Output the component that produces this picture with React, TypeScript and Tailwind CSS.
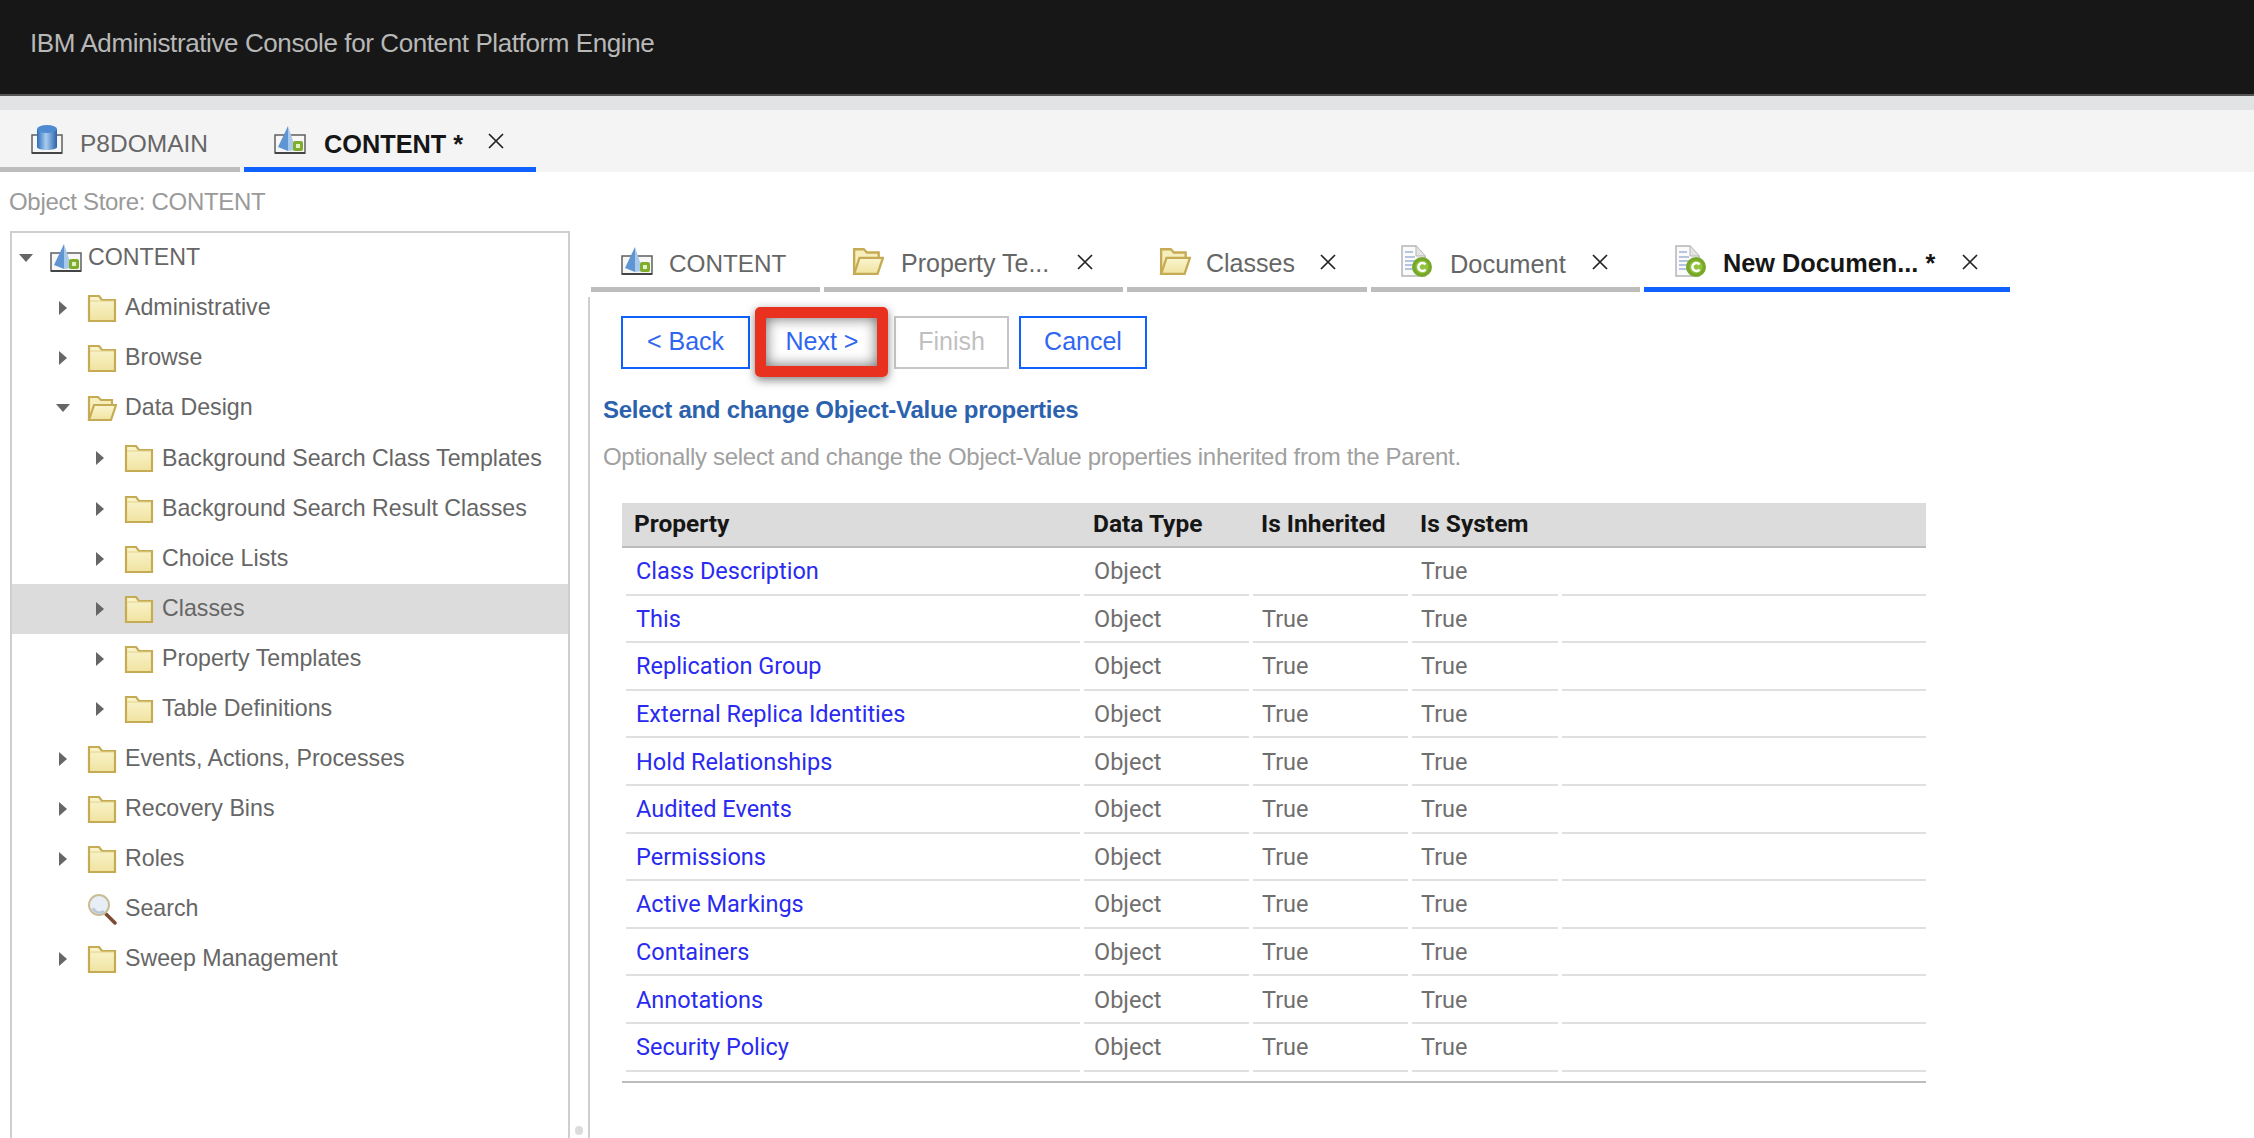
import React from 'react';

const SANS = "font-['Liberation_Sans',Arial,sans-serif]";

const FolderIcon = ({ open = false, size = 30 }: { open?: boolean; size?: number }) => (
  <svg width={size} height={size} viewBox="0 0 30 30" className="shrink-0">
    <defs>
      <linearGradient id="folderFill" x1="0" y1="0" x2="0" y2="1">
        <stop offset="0" stopColor="#faf5d0" />
        <stop offset="1" stopColor="#f0e3a0" />
      </linearGradient>
    </defs>
    {open ? (
      <>
        <path d="M2 27 V4 H11 L14 7 H25 V12" fill="#f6eebd" stroke="#c6ab55" strokeWidth="2.2" />
        <path d="M2 27 L7 12 H29 L24 27 Z" fill="url(#folderFill)" stroke="#c6ab55" strokeWidth="2.2" />
      </>
    ) : (
      <>
        <path d="M2 28 V3 H12 L15 7 H28 V28 Z" fill="url(#folderFill)" stroke="#c6ab55" strokeWidth="2.2" />
        <path d="M3 8 H27" stroke="#e2d28c" strokeWidth="1" />
      </>
    )}
  </svg>
);

const StoreIcon = () => (
  <svg width="32" height="30" viewBox="0 0 32 30" className="shrink-0">
    <rect x="1" y="10" width="30" height="18" fill="#f7f7f7" stroke="#5f5f5f" strokeWidth="1.5" />
    <path d="M1 28 H31" stroke="#444" strokeWidth="2" />
    <path d="M14 1 L4 22 L14 26 Z" fill="#5f95d3" />
    <path d="M14 1 L22 25 L14 26 Z" fill="#a9c9ea" />
    <rect x="19" y="16" width="10" height="10" rx="2" fill="#7fae2e" />
    <rect x="22" y="19" width="4" height="4" fill="#e4f1c6" />
  </svg>
);

const DomainIcon = () => (
  <svg width="32" height="32" viewBox="0 0 32 32" className="shrink-0">
    <defs>
      <linearGradient id="cyl" x1="0" y1="0" x2="1" y2="0">
        <stop offset="0" stopColor="#2f6db8" />
        <stop offset="0.45" stopColor="#a8cdf0" />
        <stop offset="1" stopColor="#2a62ab" />
      </linearGradient>
    </defs>
    <rect x="1" y="11" width="30" height="18" fill="#f7f7f7" stroke="#5f5f5f" strokeWidth="1.5" />
    <path d="M1 29 H31" stroke="#444" strokeWidth="2" />
    <path d="M6 5 V23 C6 27 26 27 26 23 V5 Z" fill="url(#cyl)" />
    <ellipse cx="16" cy="5" rx="10" ry="4" fill="#4f8bd0" />
  </svg>
);

const DocIcon = () => (
  <svg width="32" height="33" viewBox="0 0 32 33" className="shrink-0">
    <path d="M1 1 H15 L24 11 V31 H1 Z" fill="#fafafa" stroke="#b5b5b5" strokeWidth="1.5" />
    <path d="M15 1 V11 H24" fill="#e4e4e4" stroke="#b5b5b5" strokeWidth="1" />
    <path d="M4 7 H12 M4 12 H14 M4 16 H16 M4 20 H14 M4 24 H14" stroke="#9fb4d8" strokeWidth="1.5" />
    <circle cx="21" cy="22" r="10" fill="#78a82a" />
    <circle cx="21" cy="22" r="6.5" fill="#93c43f" />
    <path d="M24.5 19.5 A4 4 0 1 0 24.5 24.5" fill="none" stroke="#fff" strokeWidth="2.5" />
  </svg>
);

const SearchIcon = () => (
  <svg width="30" height="32" viewBox="0 0 30 32" className="shrink-0">
    <path d="M19 21 L28 30" stroke="#7a4a35" strokeWidth="3.5" strokeLinecap="round" />
    <circle cx="12" cy="12" r="10" fill="#e8eef6" stroke="#c9bd95" strokeWidth="2" />
    <path d="M6 15 A7 7 0 0 0 17 18" fill="none" stroke="#b9c7da" strokeWidth="2.5" />
  </svg>
);

const CloseIcon = () => (
  <svg width="16" height="16" viewBox="0 0 16 16" className="shrink-0">
    <path d="M1 1 L15 15 M15 1 L1 15" stroke="#222" strokeWidth="1.7" />
  </svg>
);

const Caret = ({ dir }: { dir: 'right' | 'down' | 'none' }) => (
  <span className="w-6 h-6 shrink-0 flex items-center justify-center">
    {dir === 'right' && (
      <svg width="8" height="14" viewBox="0 0 8 14">
        <path d="M0 0 L8 7 L0 14 Z" fill="#666" />
      </svg>
    )}
    {dir === 'down' && (
      <svg width="14" height="8" viewBox="0 0 14 8">
        <path d="M0 0 H14 L7 8 Z" fill="#666" />
      </svg>
    )}
  </span>
);

const indent = ['pl-[2px]', 'pl-[39px]', 'pl-[76px]'];

const treeRows = [
  { label: 'CONTENT', level: 0, caret: 'down', icon: 'store' },
  { label: 'Administrative', level: 1, caret: 'right', icon: 'folder' },
  { label: 'Browse', level: 1, caret: 'right', icon: 'folder' },
  { label: 'Data Design', level: 1, caret: 'down', icon: 'open' },
  { label: 'Background Search Class Templates', level: 2, caret: 'right', icon: 'folder' },
  { label: 'Background Search Result Classes', level: 2, caret: 'right', icon: 'folder' },
  { label: 'Choice Lists', level: 2, caret: 'right', icon: 'folder' },
  { label: 'Classes', level: 2, caret: 'right', icon: 'folder', selected: true },
  { label: 'Property Templates', level: 2, caret: 'right', icon: 'folder' },
  { label: 'Table Definitions', level: 2, caret: 'right', icon: 'folder' },
  { label: 'Events, Actions, Processes', level: 1, caret: 'right', icon: 'folder' },
  { label: 'Recovery Bins', level: 1, caret: 'right', icon: 'folder' },
  { label: 'Roles', level: 1, caret: 'right', icon: 'folder' },
  { label: 'Search', level: 1, caret: 'none', icon: 'search' },
  { label: 'Sweep Management', level: 1, caret: 'right', icon: 'folder' },
] as const;

const props = [
  ['Class Description', ''],
  ['This', 'True'],
  ['Replication Group', 'True'],
  ['External Replica Identities', 'True'],
  ['Hold Relationships', 'True'],
  ['Audited Events', 'True'],
  ['Permissions', 'True'],
  ['Active Markings', 'True'],
  ['Containers', 'True'],
  ['Annotations', 'True'],
  ['Security Policy', 'True'],
];

const TreeIcon = ({ kind }: { kind: string }) => {
  if (kind === 'store') return <StoreIcon />;
  if (kind === 'open') return <FolderIcon open />;
  if (kind === 'search') return <SearchIcon />;
  return <FolderIcon />;
};

interface TabProps {
  icon: React.ReactNode;
  label: string;
  active?: boolean;
  closable?: boolean;
  className: string;
  labelClass: string;
}

// underline sits at the bottom of every tab, blue when active
const Tab = ({ icon, label, active, closable, className, labelClass }: TabProps) => (
  <div className={`flex items-center border-b-[5px] ${active ? 'border-[#0f62fe]' : 'border-[#bdbdbd]'} ${className}`}>
    {icon}
    <span className={`whitespace-nowrap ${active ? 'font-bold text-[#161616]' : 'text-[#666]'} ${labelClass}`}>
      {label}
    </span>
    {closable && (
      <span className="mt-[2px]">
        <CloseIcon />
      </span>
    )}
  </div>
);

const rowGrid = 'grid grid-cols-[454px_165px_155px_146px_1fr] gap-x-[4px] pl-[4px]';

export default function App() {
  return (
    <div className={`h-screen w-full overflow-hidden flex flex-col bg-white ${SANS}`}>
      <header className="h-[96px] shrink-0 bg-[#171717] border-b-2 border-[#555] flex items-center pl-[30px] pb-[7px]">
        <span className="text-[26px] text-[#b8b8b8] tracking-[-0.4px]">IBM Administrative Console for Content Platform Engine</span>
      </header>
      <div className="h-[14px] shrink-0 bg-[#e2e3e5]" />

      <div className="h-[62px] shrink-0 bg-[#f4f4f4] flex items-stretch gap-[4px]">
        <Tab className="w-[240px] pl-[31px] gap-[17px] pt-[2px]" icon={<DomainIcon />} label="P8DOMAIN" labelClass="text-[24.5px] mt-[10px]" />
        <Tab className="w-[292px] pl-[30px] gap-[18px] pt-[2px]" icon={<StoreIcon />} label="CONTENT *" active closable labelClass="text-[25.3px] mt-[10px] mr-[7px]" />
      </div>

      <div className="h-[59px] shrink-0 flex items-center pl-[9px]">
        <span className="text-[24px] text-[#9a9a9a] tracking-[-0.3px]">Object Store: CONTENT</span>
      </div>

      <div className="flex-1 flex min-h-0">
        <aside className="w-[560px] ml-[10px] shrink-0 border-2 border-b-0 border-[#cfcfcf]">
          {treeRows.map((row) => (
            <div
              key={row.label}
              className={`h-[50.1px] flex items-center ${indent[row.level]} ${'selected' in row ? 'bg-[#dcdcdc]' : ''}`}
            >
              <Caret dir={row.caret} />
              <span className="ml-[12px]">
                <TreeIcon kind={row.icon} />
              </span>
              <span className={`${row.level === 0 ? 'ml-[6px]' : 'ml-[8px]'} -mt-[1px] text-[23.2px] text-[#666] whitespace-nowrap`}>{row.label}</span>
            </div>
          ))}
        </aside>

        <div className="relative flex-1 min-w-0 pl-[18px]">
          <div className="absolute left-[5px] bottom-[3px] w-[8px] h-[9px] rounded-full bg-[#dcdcdc]" />

          <div className="h-[61px] ml-[3px] flex items-stretch gap-[4px]">
            <Tab className="w-[229px] pl-[30px] gap-[16px] pt-[4px]" icon={<StoreIcon />} label="CONTENT" labelClass="text-[24.3px] mt-[6px]" />
            <Tab className="w-[299px] pl-[28px] gap-[17px] pt-[4px]" icon={<FolderIcon open size={32} />} label="Property Te..." closable labelClass="text-[25px] mt-[6px] mr-[11px]" />
            <Tab className="w-[240px] pl-[32px] gap-[15px] pt-[4px]" icon={<FolderIcon open size={32} />} label="Classes" closable labelClass="text-[25px] mt-[6px] mr-[10px]" />
            <Tab className="w-[269px] pl-[30px] gap-[17px] pt-[4px]" icon={<DocIcon />} label="Document" closable labelClass="text-[25.4px] mt-[6px] mr-[9px]" />
            <Tab className="w-[366px] pl-[31px] gap-[16px] pt-[4px]" icon={<DocIcon />} label="New Documen... *" active closable labelClass="text-[25.3px] mt-[6px] mr-[11px]" />
          </div>

          <div className="mt-[5px] h-full border-l-2 border-[#cfcfcf] pl-[13px] pt-[19px]">
            <div className="flex ml-[18px] h-[53px] text-[25px]">
              <button className="w-[129px] pb-[1px] border-2 border-[#0f62fe] text-[#2f66f0]">&lt; Back</button>
              <div className="relative ml-[10px] mr-[10px]">
                <button className="w-[124px] h-full pb-[1px] text-[#2f66f0]">Next &gt;</button>
                <div className="absolute -left-[5px] -right-[4px] -top-[9px] -bottom-[8px] border-[11px] border-[#e8321f] rounded-[5px] shadow-[0_3px_10px_rgba(0,0,0,0.5),inset_0_0_14px_rgba(0,0,0,0.6)]" />
              </div>
              <button className="w-[115px] pb-[1px] border-2 border-[#c6c6c6] text-[#c0c0c0]">Finish</button>
              <button className="ml-[10px] w-[128px] pb-[1px] border-2 border-[#0f62fe] text-[#2f66f0]">Cancel</button>
            </div>

            <h2 className="mt-[24px] h-[34px] leading-[34px] text-[24px] font-bold text-[#2b62ae] tracking-[-0.28px]">
              Select and change Object-Value properties
            </h2>
            <p className="mt-[13px] h-[34px] leading-[34px] text-[24px] text-[#a0a0a0] tracking-[-0.3px]">
              Optionally select and change the Object-Value properties inherited from the Parent.
            </p>

            <div className="mt-[29px] ml-[19px] w-[1304px] font-['Roboto',sans-serif] text-[23.5px]">
              <div className={`${rowGrid} h-[45px] items-center bg-[#dcdcdc] border-b-2 border-[#bcbcbc] font-bold text-[#161616] text-[24.5px]`}>
                <div className="pl-[8px]">Property</div>
                <div className="pl-[9px]">Data Type</div>
                <div className="pl-[8px]">Is Inherited</div>
                <div className="pl-[8px]">Is System</div>
                <div />
              </div>
              {props.map(([name, inherited]) => (
                <div key={name} className={`${rowGrid} h-[47.6px]`}>
                  <div className="border-b-2 border-[#e0e0e0] pl-[10px] pt-[2px] flex items-center text-[#2a2af0]">{name}</div>
                  <div className="border-b-2 border-[#e0e0e0] pl-[10px] pt-[2px] flex items-center text-[#6f6f6f]">Object</div>
                  <div className="border-b-2 border-[#e0e0e0] pl-[9px] pt-[2px] flex items-center text-[#6f6f6f]">{inherited}</div>
                  <div className="border-b-2 border-[#e0e0e0] pl-[9px] pt-[2px] flex items-center text-[#6f6f6f]">True</div>
                  <div className="border-b-2 border-[#e0e0e0]" />
                </div>
              ))}
              <div className="mt-[9px] h-[2px] bg-[#bdbdbd]" />
            </div>
          </div>
        </div>
      </div>
    </div>
  );
}
